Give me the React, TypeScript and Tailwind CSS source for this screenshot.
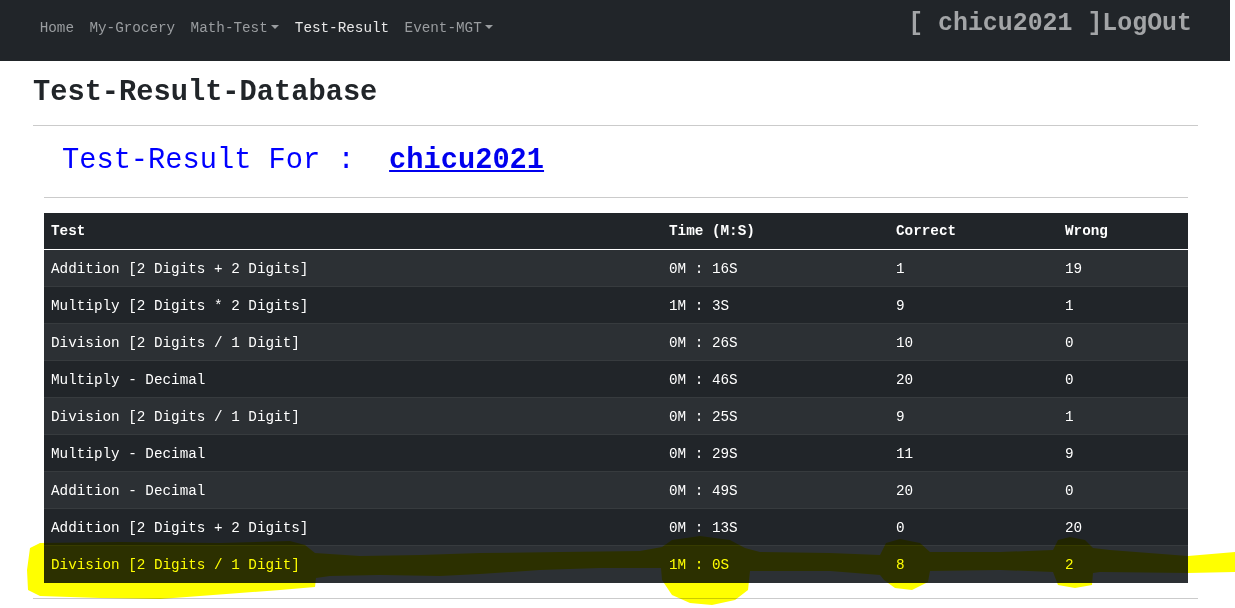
const mono = "font-['Liberation_Mono','Courier_New',monospace]";

const rows = [
  ["Addition [2 Digits + 2 Digits]", "0M : 16S", "1", "19"],
  ["Multiply [2 Digits * 2 Digits]", "1M : 3S", "9", "1"],
  ["Division [2 Digits / 1 Digit]", "0M : 26S", "10", "0"],
  ["Multiply - Decimal", "0M : 46S", "20", "0"],
  ["Division [2 Digits / 1 Digit]", "0M : 25S", "9", "1"],
  ["Multiply - Decimal", "0M : 29S", "11", "9"],
  ["Addition - Decimal", "0M : 49S", "20", "0"],
  ["Addition [2 Digits + 2 Digits]", "0M : 13S", "0", "20"],
  ["Division [2 Digits / 1 Digit]", "1M : 0S", "8", "2"],
];

const Caret = () => (
  <span className="ml-[0.255em] inline-block align-[0.2em] border-t-[0.3em] border-x-[0.3em] border-x-transparent border-t-current" />
);

const Navbar = () => {
  const link = "px-[7.7px] text-[#9a9da0]";
  return (
    <nav className={`flex h-[61px] w-[1230px] items-start justify-between bg-[#212529] pl-[32px] pr-[38px] ${mono}`}>
      <ul className="mt-[18px] flex text-[14.3px] leading-[20px]">
        <li className={link}>Home</li>
        <li className={link}>My-Grocery</li>
        <li className={link}>
          Math-Test
          <Caret />
        </li>
        <li className="px-[7.7px] text-[#e8e8e8]">Test-Result</li>
        <li className={link}>
          Event-MGT
          <Caret />
        </li>
      </ul>
      <div className="mt-[8px] text-[24.9px] font-bold leading-[30px] text-[#a3a5a7]">[ chicu2021 ]LogOut</div>
    </nav>
  );
};

const ResultTable = () => {
  const cols = "grid grid-cols-[618px_227px_169px_130px]";
  return (
    <div className="mt-[15px] bg-[#212529] text-[14.3px] text-white">
      <div className={`${cols} h-[37px] items-center border-b border-white font-bold`}>
        <div className="pl-[7px] pt-[1px]">Test</div>
        <div className="pl-[7px] pt-[1px]">Time (M:S)</div>
        <div className="pl-[7px] pt-[1px]">Correct</div>
        <div className="pl-[7px] pt-[1px]">Wrong</div>
      </div>
      {rows.map((r, i) => (
        <div
          key={i}
          className={`${cols} h-[37px] items-center ${i < rows.length - 1 ? "border-b border-[#373b3e]" : ""} ${i % 2 === 0 ? "bg-[#2c3034]" : "bg-[#212529]"}`}
        >
          {r.map((c, j) => (
            <div key={j} className="whitespace-pre pl-[7px] pt-[3px]">
              {c}
            </div>
          ))}
        </div>
      ))}
    </div>
  );
};

const Highlight = () => (
  <svg
    className="pointer-events-none absolute left-0 top-0 mix-blend-multiply"
    width="1235"
    height="608"
    viewBox="0 0 1235 608"
  >
    <path
      fill="#ffff00"
      d="M30 548 L40 543 L120 542 L220 543 L290 541 L305 545 L315 553 L360 556 L420 555 L480 553 L560 552 L640 551 L662 547 L672 540 L700 536 L730 540 L745 548 L760 552 L830 553 L880 555 L886 543 L900 539 L920 543 L930 552 L1000 552 L1053 550 L1058 540 L1070 537 L1085 540 L1093 548 L1110 550 L1188 556 L1235 552 L1235 572 L1188 573 L1100 572 L1093 573 L1092 585 L1075 588 L1058 585 L1053 572 L1000 570 L930 571 L928 582 L912 590 L895 588 L884 580 L880 575 L830 571 L750 571 L748 590 L735 600 L712 605 L690 603 L672 595 L662 580 L661 568 L600 568 L540 570 L480 574 L440 576 L380 575 L330 576 L316 578 L315 587 L280 590 L200 596 L160 599 L100 598 L40 596 L28 590 L27 570 Z"
    />
  </svg>
);

export default function App() {
  return (
    <div className={`relative isolate h-[608px] w-[1235px] overflow-hidden bg-white ${mono}`}>
      <Navbar />
      <div className="w-[1198px] pl-[33px]">
        <h2 className="mt-[14px] h-[35px] text-[28.7px] font-bold leading-[35px] text-[#212529]">Test-Result-Database</h2>
        <hr className="mt-[15px] border-t border-[#cbcbcb]" />
        <div className="ml-[11px] mr-[10px]">
          <div className="mt-[17px] h-[35px] whitespace-pre pl-[18px] text-[28.7px] leading-[35px] text-[#0000ff]">
            {"Test-Result For :  "}
            <a className="font-bold text-[#0000ee] underline">chicu2021</a>
          </div>
          <hr className="mt-[19px] border-t border-[#cbcbcb]" />
          <ResultTable />
        </div>
        <hr className="mt-[15px] border-t border-[#cbcbcb]" />
      </div>
      <Highlight />
    </div>
  );
}
